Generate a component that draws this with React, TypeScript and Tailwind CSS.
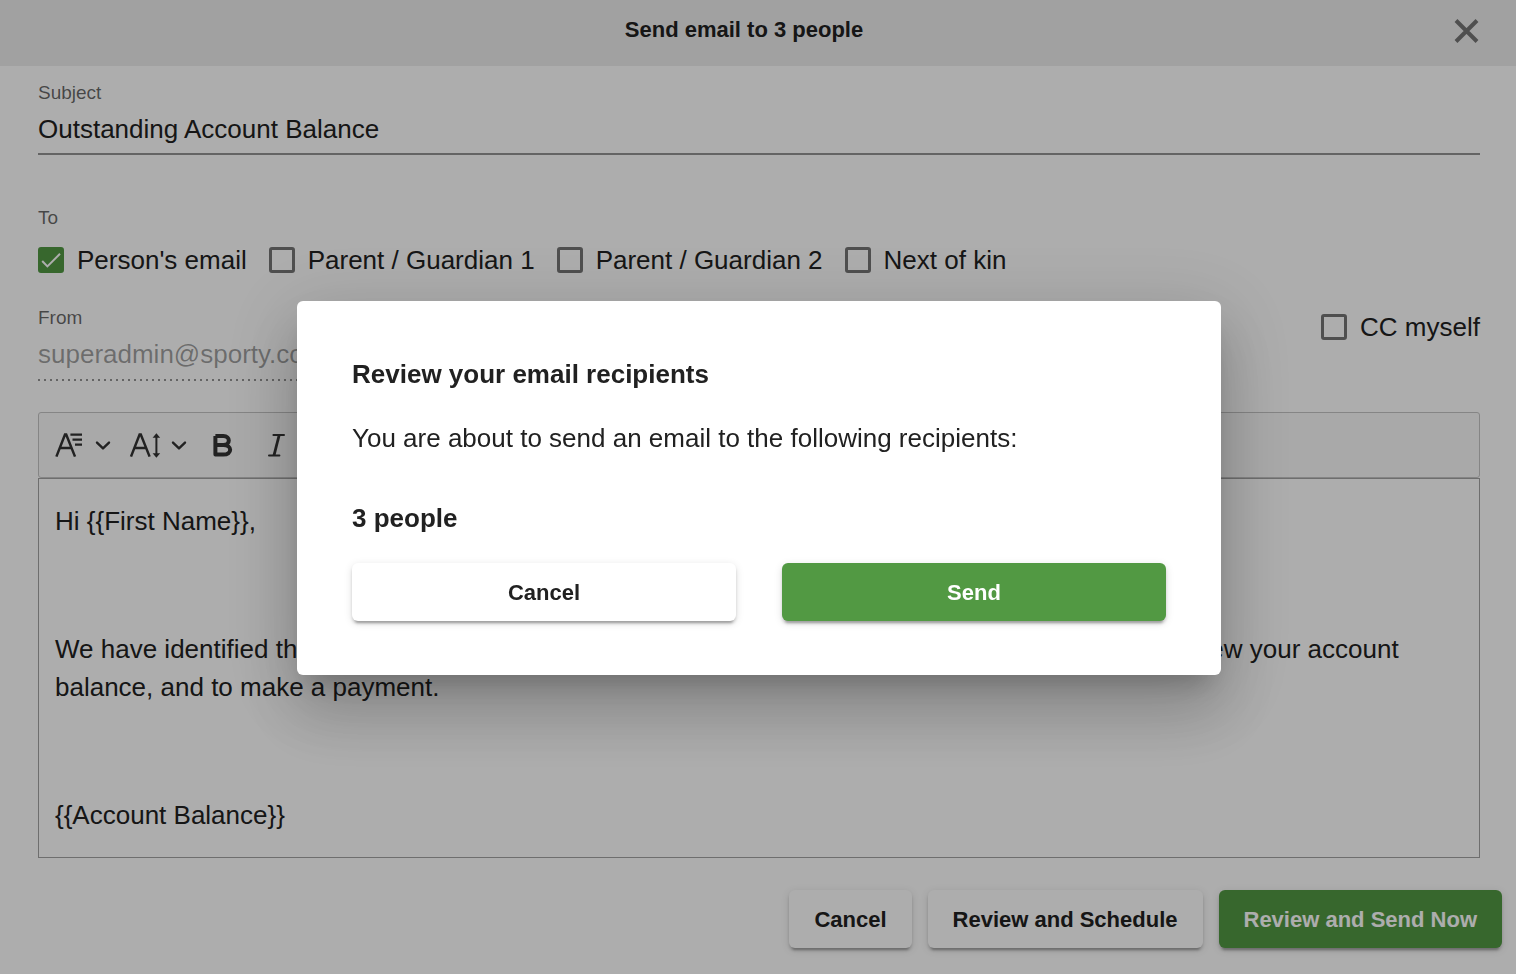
import React, { useState } from 'react';

interface CheckOptionProps {
  label: string;
  checked: boolean;
  onChange: (checked: boolean) => void;
}

const CheckOption: React.FC<CheckOptionProps> = ({ label, checked, onChange }) => (
  <label className="flex items-center gap-[13px] text-[26px] leading-8 cursor-pointer whitespace-nowrap">
    <span className="relative flex w-[26px] h-[26px] shrink-0">
      <input
        type="checkbox"
        checked={checked}
        onChange={(e) => onChange(e.target.checked)}
        className="appearance-none w-full h-full rounded-[3px] border-3 border-[#757575] checked:border-[#529943] checked:bg-[#529943]"
      />
      {checked && (
        <svg viewBox="0 0 26 26" className="absolute inset-0 pointer-events-none" fill="none" stroke="#fff" strokeWidth="2">
          <path d="M4.2 14 L9.4 19.4 L22 6.8" />
        </svg>
      )}
    </span>
    {label}
  </label>
);

const Chevron = () => (
  <svg width="16" height="16" viewBox="0 0 16 16" fill="none" stroke="currentColor" strokeWidth="2.4" strokeLinecap="round" strokeLinejoin="round">
    <path d="M2 5.6 L8 11.4 L14 5.6" />
  </svg>
);

const FontFamilyIcon = () => (
  <svg width="34" height="32" viewBox="0 0 34 32" fill="none" stroke="currentColor" strokeWidth="2.5">
    <path d="M5.4 27.6 L14 5.6 H15.2 L24 27.6 M8.6 19 H20.6" />
    <path d="M19.4 5.7 H31 M21.5 10.7 H31 M24 15.7 H31" strokeWidth="2.3" />
  </svg>
);

const FontSizeIcon = () => (
  <svg width="34" height="32" viewBox="0 0 34 32" fill="none" stroke="currentColor" strokeWidth="2.5">
    <path d="M4 27.6 L12.6 5.6 H13.8 L22.6 27.6 M7.2 19 H19.2" />
    <path d="M29.4 7 V26" strokeWidth="2" />
    <path d="M25.6 8.8 L29.4 4.2 L33.2 8.8 Z M25.6 24.2 L29.4 28.8 L33.2 24.2 Z" fill="currentColor" stroke="none" />
  </svg>
);

const BoldIcon = () => (
  <svg width="24" height="32" viewBox="0 0 24 32" fill="none" stroke="currentColor" strokeWidth="4" strokeLinejoin="round">
    <path d="M5.4 7 H13.4 C20.6 7 20.6 16 13.4 16 H5.4 M13.4 16 C22.4 16 22.4 25.6 13.4 25.6 H5.4 V7" />
  </svg>
);

const ItalicIcon = () => (
  <svg width="24" height="32" viewBox="0 0 24 32" fill="none" stroke="currentColor" strokeWidth="2" strokeLinecap="round">
    <path d="M9.4 5.9 H20 M5 26.6 H15.4" />
    <path d="M15.2 6 L10 26.4" strokeWidth="2.8" strokeLinecap="butt" />
  </svg>
);

const raised = 'shadow-[0_5px_2px_-3px_rgba(0,0,0,0.2),0_3px_3px_0_rgba(0,0,0,0.14),0_2px_8px_0_rgba(0,0,0,0.12)]';

interface ActionButtonProps {
  children: React.ReactNode;
  primary?: boolean;
  className?: string;
}

const ActionButton: React.FC<ActionButtonProps> = ({ children, primary, className = '' }) => (
  <button
    type="button"
    className={`h-[58px] rounded-md text-[22px] font-bold ${raised} ${primary ? 'bg-[#529943] text-white' : 'bg-white text-[#212121]'} ${className}`}
  >
    {children}
  </button>
);

export default function App() {
  const [subject, setSubject] = useState('Outstanding Account Balance');
  const [recipients, setRecipients] = useState([
    { label: "Person's email", checked: true },
    { label: 'Parent / Guardian 1', checked: false },
    { label: 'Parent / Guardian 2', checked: false },
    { label: 'Next of kin', checked: false },
  ]);
  const [ccMyself, setCcMyself] = useState(false);

  const toggle = (index: number, checked: boolean) =>
    setRecipients(recipients.map((r, i) => (i === index ? { ...r, checked } : r)));

  return (
    <div className="min-h-screen bg-white text-[#212121] font-['Liberation_Sans',Arial,sans-serif]">
      <header className="flex items-center h-[66px] px-9 pb-2 bg-[#eee]">
        <h1 className="flex-1 text-center text-[22px] font-bold">Send email to 3 people</h1>
        <button type="button" aria-label="Close" className="w-7 h-7 text-[#757575]">
          <svg viewBox="0 0 28 28" fill="none" stroke="currentColor" strokeWidth="4">
            <path d="M4 5.5 L25 26.5 M25 5.5 L4 26.5" />
          </svg>
        </button>
      </header>

      <main className="pl-[38px] pr-9 pt-[15px]">
        <div>
          <label htmlFor="subject" className="block text-[19px] leading-6 text-black/60">Subject</label>
          <input
            id="subject"
            value={subject}
            onChange={(e) => setSubject(e.target.value)}
            className="block w-full h-[50px] text-[26px] border-b-2 border-black/42 bg-transparent outline-none"
          />
        </div>

        <fieldset className="pt-[51px]">
          <legend className="contents text-[19px] text-black/60">
            <span className="block leading-6">To</span>
          </legend>
          <div className="flex flex-wrap gap-[22px] pt-3.5">
            {recipients.map((r, i) => (
              <CheckOption key={r.label} label={r.label} checked={r.checked} onChange={(c) => toggle(i, c)} />
            ))}
          </div>
        </fieldset>

        <div className="flex justify-between pt-[30px]">
          <div className="w-1/2">
            <label htmlFor="from" className="block text-[19px] leading-6 text-black/60">From</label>
            <input
              id="from"
              disabled
              value="superadmin@sporty.co.nz"
              className="block w-full h-[49px] text-[26px] text-black/38"
            />
            <div className="h-0.5 bg-[repeating-linear-gradient(to_right,rgba(0,0,0,0.42)_0px_2px,transparent_2px_6px)]" />
          </div>
          <div className="pt-[5px]">
            <CheckOption label="CC myself" checked={ccMyself} onChange={setCcMyself} />
          </div>
        </div>

        <section className="mt-[31px]" aria-label="Message">
          <div className="flex items-center gap-4 h-[66px] px-3 rounded-[3px] border border-[#c4c4c4] bg-[#fafafa] text-[#333]" role="toolbar">
            <button type="button" aria-label="Font family" className="flex items-center gap-2.5"><FontFamilyIcon /><Chevron /></button>
            <button type="button" aria-label="Font size" className="flex items-center gap-2.5"><FontSizeIcon /><Chevron /></button>
            <button type="button" aria-label="Bold" className="flex justify-center w-[38px]"><BoldIcon /></button>
            <button type="button" aria-label="Italic" className="flex justify-center w-[38px]"><ItalicIcon /></button>
          </div>
          <div className="px-4 py-[23px] border border-[#a3a3a3] text-[26px] leading-[38px] space-y-[26px]">
            <p>Hi {'{{First Name}}'},</p>
            <p>&nbsp;</p>
            <p>
              We have identified that you currently have an outstanding balance. Please click the link below to review your account
              balance, and to make a payment.
            </p>
            <p>&nbsp;</p>
            <p>{'{{Account Balance}}'}</p>
          </div>
        </section>
      </main>

      <footer className="flex justify-end gap-4 pt-8 pr-3.5 pb-6">
        <ActionButton className="px-[25px]">Cancel</ActionButton>
        <ActionButton className="px-[25px]">Review and Schedule</ActionButton>
        <ActionButton primary className="px-[25px]">Review and Send Now</ActionButton>
      </footer>

      {/* Confirmation dialog */}
      <div className="fixed inset-0 flex items-center justify-center pt-0.5 pl-0.5 bg-black/32">
        <div
          role="dialog"
          aria-modal="true"
          aria-labelledby="review-title"
          className="w-full max-w-[924px] px-[55px] pt-[53px] pb-[54px] rounded-md bg-white shadow-[0_18px_24px_-11px_rgba(0,0,0,0.2),0_39px_62px_5px_rgba(0,0,0,0.14),0_15px_75px_13px_rgba(0,0,0,0.12)]"
        >
          <h2 id="review-title" className="text-[26px] leading-10 font-bold">Review your email recipients</h2>
          <p className="pt-6 text-[26px] leading-10">You are about to send an email to the following recipients:</p>
          <p className="pt-10 text-[26px] leading-10 font-bold">3 people</p>
          <div className="grid grid-cols-2 gap-[46px] pt-[25px]">
            <ActionButton>Cancel</ActionButton>
            <ActionButton primary>Send</ActionButton>
          </div>
        </div>
      </div>
    </div>
  );
}
